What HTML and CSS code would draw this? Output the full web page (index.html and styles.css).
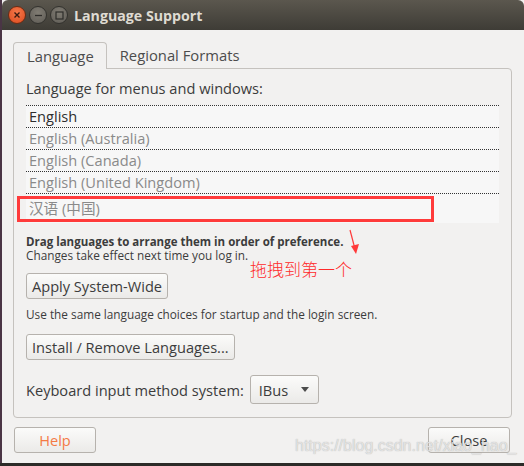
FILE: index.html
```html
<!DOCTYPE html>
<html>
<head>
<meta charset="utf-8">
<link rel="stylesheet" href="styles.css">
</head>
<body>
<div class="window">
  <div class="titlebar">
    <div class="wbtns">
      <span class="wbtn close"><svg width="8" height="8" viewBox="0 0 8 8"><path d="M1.5 1.5 L6.5 6.5 M6.5 1.5 L1.5 6.5" stroke="#3a1a10" stroke-width="1.4"/></svg></span>
      <span class="wbtn"><svg width="9" height="9" viewBox="0 0 9 9"><path d="M1 4.5 H8" stroke="#2e2d2a" stroke-width="1.3"/></svg></span>
      <span class="wbtn"><svg width="9" height="9" viewBox="0 0 9 9"><rect x="1" y="1" width="7" height="7" fill="none" stroke="#2e2d2a" stroke-width="1.2"/></svg></span>
    </div>
    <div class="title">Language Support</div>
  </div>
  <div class="content">
    <div class="tabs">
      <div class="tab active">Language</div>
      <div class="tab">Regional Formats</div>
    </div>
    <div class="frame">
      <div class="label">Language for menus and windows:</div>
      <div class="list">
        <div class="row first">English</div>
        <div class="row">English (Australia)</div>
        <div class="row">English (Canada)</div>
        <div class="row">English (United Kingdom)</div>
        <div class="row last">汉语 (中国)</div>
      </div>
      <div class="hint"><div class="bold">Drag languages to arrange them in order of preference.</div><div>Changes take effect next time you log in.</div></div>
      <div class="annot">拖拽到第一个</div>
      <div class="btnrow"><span class="btn">Apply System-Wide</span></div>
      <div class="small">Use the same language choices for startup and the login screen.</div>
      <div class="btnrow two"><span class="btn">Install / Remove Languages...</span></div>
      <div class="kbd">
        <span>Keyboard input method system:</span>
        <span class="combo">IBus <svg width="8" height="5" viewBox="0 0 8 5"><path d="M0 0 H8 L4 5 Z" fill="#4c4c4c"/></svg></span>
      </div>
    </div>
    <div class="bottom">
      <span class="btn foot help">Help</span>
      <span class="btn foot">Close</span>
    </div>
  </div>
  <div class="redbox"></div>
  <svg class="arrow" width="14" height="28" viewBox="0 0 14 28"><path d="M2 1 L7 20" stroke="#ff3a3a" stroke-width="1.2"/><path d="M3 17 L11 15 L8 25 Z" fill="#ff3a3a"/></svg>
  <div class="watermark">https://blog.csdn.net/xiao_hao_</div>
</div>
</body>
</html>
```

FILE: styles.css
```css
html, body {
  margin: 0;
  padding: 0;
}
body {
  width: 524px;
  height: 466px;
  overflow: hidden;
  background: #2c2b28;
  font-family: "Open Sans", "Noto Sans CJK SC", sans-serif;
}
.window {
  position: relative;
  width: 522px;
  height: 463px;
  border-left: 2px solid #4a3545;
  background: #f2f1f0;
}
.titlebar {
  height: 30px;
  background: linear-gradient(#5b574e, #3e3c36);
  border-top-left-radius: 6px;
  border-top-right-radius: 6px;
  display: flex;
  align-items: center;
}
.wbtns {
  display: flex;
  gap: 3px;
  padding-left: 6px;
}
.wbtn {
  width: 16px;
  height: 16px;
  border-radius: 50%;
  background: radial-gradient(circle at 50% 35%, #807c73, #5e5b55);
  border: 1px solid #33322e;
  display: flex;
  align-items: center;
  justify-content: center;
}
.wbtn.close {
  background: radial-gradient(circle at 50% 35%, #f5784a, #db4a1e);
  border-color: #6b2c14;
}
.title {
  margin-left: 6px;
  color: #dfdbd2;
  font-weight: bold;
  font-size: 14.2px;
}
.content {
  padding: 12px 12px 0 11px;
}
.tabs {
  display: flex;
  height: 26px;
  align-items: flex-end;
}
.tab {
  font-size: 14.8px;
  color: #4c4c4c;
  padding: 0 13px;
  height: 26px;
  line-height: 26px;
}
.tab.active {
  border: 1px solid #c5c2be;
  border-bottom: none;
  border-radius: 4px 4px 0 0;
  padding: 0 12px 0 13px;
  background: #f2f1f0;
  position: relative;
  z-index: 1;
  margin-bottom: -1px;
}
.frame {
  border: 1px solid #c5c2be;
  border-radius: 0 4px 4px 4px;
  height: 350px;
  width: 499px;
  padding: 0 12px;
  box-sizing: border-box;
}
.label {
  font-size: 14.6px;
  color: #3c3c3c;
  margin-top: 9px;
  line-height: 20px;
}
.list {
  margin-top: 7px;
  background: #f7f7f7;
}
.row {
  border-top: 1px dotted #333;
  height: 21px;
  line-height: 21px;
  font-size: 14.6px;
  color: #8a8a8a;
  padding-left: 3px;
}
.row.first {
  color: #2e2e2e;
}
.row.last {
  height: 29px;
  line-height: 29px;
}
.hint {
  font-size: 11.8px;
  color: #3c3c3c;
  line-height: 13px;
  margin-top: 12px;
}
.hint .bold {
  font-weight: bold;
  font-size: 11.5px;
  line-height: 14px;
}
.annot {
  position: absolute;
  left: 248px;
  top: 256px;
  font-family: "Noto Sans CJK SC", sans-serif;
  font-weight: 300;
  font-size: 17px;
  color: #ff2a2a;
}
.btnrow {
  margin-top: 11px;
  display: flex;
}
.btnrow.two {
  margin-top: 13px;
}
.btn {
  display: inline-block;
  border: 1px solid #b6b2ad;
  border-radius: 3px;
  background: linear-gradient(#fbfbfa, #ebeae8);
  font-size: 14.6px;
  color: #3c3c3c;
  height: 24px;
  line-height: 24px;
  padding: 0 5px;
}
.small {
  font-size: 11.8px;
  color: #3c3c3c;
  margin-top: 8px;
  line-height: 14px;
}
.kbd {
  margin-top: 15px;
  display: flex;
  align-items: center;
  gap: 6px;
  font-size: 14.6px;
  color: #3c3c3c;
}
.combo {
  display: inline-flex;
  align-items: center;
  gap: 13px;
  border: 1px solid #b6b2ad;
  border-radius: 3px;
  background: linear-gradient(#fbfbfa, #ebeae8);
  height: 27px;
  padding: 0 9px 0 8px;
  color: #3c3c3c;
}
.bottom {
  display: flex;
  justify-content: space-between;
  margin-top: 9px;
  width: 496px;
  margin-left: 1px;
}
.btn.foot {
  width: 80px;
  text-align: center;
  padding: 0;
}
.btn.help {
  color: #f47a45;
}
.redbox {
  position: absolute;
  left: 15px;
  top: 196px;
  width: 411px;
  height: 20px;
  border: 3px solid #ff3b3b;
}
.arrow {
  position: absolute;
  left: 346px;
  top: 229px;
}
.watermark {
  position: absolute;
  left: 293px;
  top: 437px;
  font-family: "Liberation Sans", sans-serif;
  font-size: 16px;
  color: rgba(235, 235, 235, 0.85);
  text-shadow: 0 0 1px rgba(120,120,120,0.6);
}
```
